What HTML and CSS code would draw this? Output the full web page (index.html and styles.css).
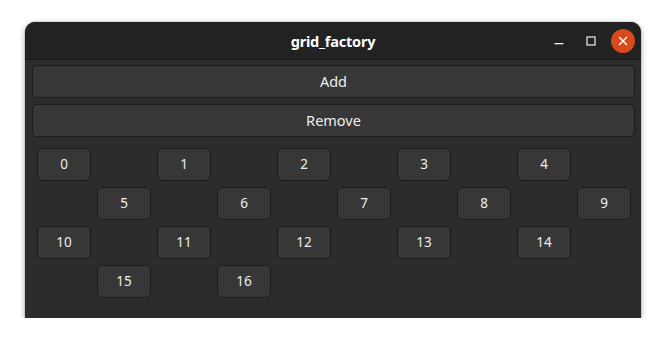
FILE: index.html
```html
<!DOCTYPE html>
<html>
<head>
<meta charset="utf-8">
<link rel="stylesheet" href="styles.css">
</head>
<body>
<div class="desk">
  <div class="window">
    <div class="titlebar">
      <div class="title">grid_factory</div>
      <div class="controls">
        <span class="ctl min"><svg width="10" height="10" viewBox="0 0 10 10"><rect x="0.5" y="7" width="9" height="1.3" fill="#eeeeee"/></svg></span>
        <span class="ctl max"><svg width="10" height="10" viewBox="0 0 10 10"><rect x="1" y="1" width="8" height="8" fill="none" stroke="#eeeeee" stroke-width="1.2"/></svg></span>
        <span class="ctl close"><svg width="10" height="10" viewBox="0 0 10 10"><path d="M1 1 L9 9 M9 1 L1 9" stroke="#ffffff" stroke-width="1.4" fill="none"/></svg></span>
      </div>
    </div>
    <div class="content">
      <button class="wide">Add</button>
      <button class="wide">Remove</button>
      <div class="grid">
        <button class="cell r1 c1">0</button>
        <button class="cell r1 c3">1</button>
        <button class="cell r1 c5">2</button>
        <button class="cell r1 c7">3</button>
        <button class="cell r1 c9">4</button>
        <button class="cell r2 c2">5</button>
        <button class="cell r2 c4">6</button>
        <button class="cell r2 c6">7</button>
        <button class="cell r2 c8">8</button>
        <button class="cell r2 c10">9</button>
        <button class="cell r3 c1">10</button>
        <button class="cell r3 c3">11</button>
        <button class="cell r3 c5">12</button>
        <button class="cell r3 c7">13</button>
        <button class="cell r3 c9">14</button>
        <button class="cell r4 c2">15</button>
        <button class="cell r4 c4">16</button>
      </div>
    </div>
  </div>
</div>
</body>
</html>
```
FILE: styles.css
```css
html, body {
  margin: 0;
  padding: 0;
  background: #ffffff;
}
body {
  font-family: "Noto Sans", "DejaVu Sans", sans-serif;
  color: #eeeeee;
}
.desk {
  padding: 22px 25px 0 25px;
}
.window {
  width: 616px;
  height: 296px;
  background: #2c2c2c;
  border-radius: 10px 10px 0 0;
  box-shadow: 0 2px 6px rgba(0,0,0,0.35), 0 0 0 1px rgba(0,0,0,0.08);
  overflow: hidden;
  display: flex;
  flex-direction: column;
}
.titlebar {
  height: 37px;
  background: #222222;
  border-bottom: 1px solid #181818;
  position: relative;
  display: flex;
  align-items: center;
  justify-content: center;
}
.title {
  font-weight: bold;
  font-size: 14.5px;
  color: #ffffff;
  letter-spacing: -0.2px;
}
.controls {
  position: absolute;
  right: 6px;
  top: 0;
  height: 37px;
  display: flex;
  align-items: center;
  gap: 8px;
}
.ctl {
  width: 24px;
  height: 24px;
  display: flex;
  align-items: center;
  justify-content: center;
}
.ctl svg { display: block; }
.close {
  background: #d84a1b;
  border-radius: 50%;
  width: 24px;
  height: 24px;
}
.content {
  padding: 5px 6px 0 7px;
  display: flex;
  flex-direction: column;
  gap: 6px;
}
button {
  font-family: inherit;
  color: #eeeeee;
  background: #373737;
  border: 1px solid #1c1c1c;
  border-radius: 5px;
  padding: 0;
  margin: 0;
}
.wide {
  height: 33px;
  font-size: 14.5px;
  padding-bottom: 2px;
}
.grid {
  margin-top: 5px;
  padding-left: 5px;
  display: grid;
  grid-template-columns: repeat(10, 54px);
  grid-template-rows: repeat(4, 33px);
  column-gap: 6px;
  row-gap: 6px;
}
.cell {
  font-size: 13.5px;
  padding-bottom: 1px;
}
.r1 { grid-row: 1; }
.r2 { grid-row: 2; }
.r3 { grid-row: 3; }
.r4 { grid-row: 4; }
.c1 { grid-column: 1; }
.c2 { grid-column: 2; }
.c3 { grid-column: 3; }
.c4 { grid-column: 4; }
.c5 { grid-column: 5; }
.c6 { grid-column: 6; }
.c7 { grid-column: 7; }
.c8 { grid-column: 8; }
.c9 { grid-column: 9; }
.c10 { grid-column: 10; }
```
